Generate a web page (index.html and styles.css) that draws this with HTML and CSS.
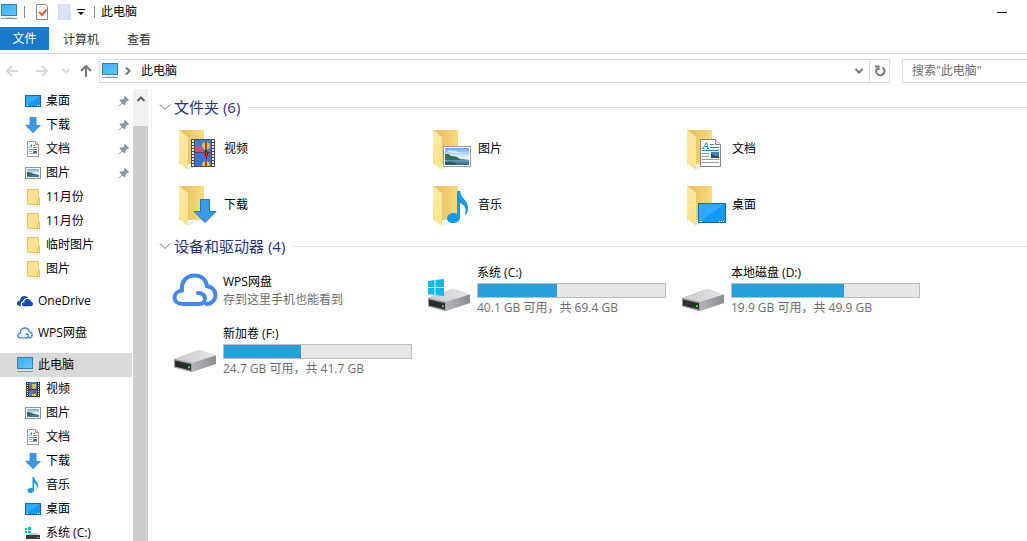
FILE: index.html
```html
<!DOCTYPE html>
<html lang="zh-CN">
	<head>
		<meta charset="UTF-8" />
		<meta name="viewport" content="width=device-width, initial-scale=1.0" />
		<title>此电脑</title>
		<link rel="stylesheet" href="styles.css">
	</head>

	<body>
		<!-- icon set -->
		<svg class="icon-set" width="0" height="0" aria-hidden="true">
			<defs>
				<linearGradient id="screenFill" x1="0" y1="0" x2="1" y2="1">
					<stop offset="0" stop-color="#3aaefb" />
					<stop offset="1" stop-color="#5fc9ff" />
				</linearGradient>
				<linearGradient id="deskFill" x1="0" y1="0" x2="1" y2="1">
					<stop offset="0.5" stop-color="#2ea9ff" />
					<stop offset="0.5" stop-color="#1499f8" />
				</linearGradient>
				<linearGradient id="folderBack" x1="0" y1="0" x2="1" y2="0">
					<stop offset="0.3" stop-color="#e9c563" />
					<stop offset="1" stop-color="#fbdb7f" />
				</linearGradient>
				<linearGradient id="folderFront" x1="0" y1="0" x2="0" y2="1">
					<stop offset="0" stop-color="#ffeaa6" />
					<stop offset="1" stop-color="#ffe28a" />
				</linearGradient>
				<linearGradient id="skyFill" x1="0" y1="0" x2="0" y2="1">
					<stop offset="0" stop-color="#6ba6f3" />
					<stop offset="0.5" stop-color="#dcefff" />
				</linearGradient>
				<linearGradient id="seaFill" x1="0" y1="0" x2="0" y2="1">
					<stop offset="0" stop-color="#6f9dbb" />
					<stop offset="1" stop-color="#2c6293" />
				</linearGradient>
				<linearGradient id="driveTop" x1="0" y1="0" x2="1" y2="0">
					<stop offset="0" stop-color="#c9cacc" />
					<stop offset="1" stop-color="#e5e6e8" />
				</linearGradient>
				<linearGradient id="driveSide" x1="0" y1="0" x2="1" y2="0">
					<stop offset="0" stop-color="#b4b5b8" />
					<stop offset="1" stop-color="#8d8e92" />
				</linearGradient>
			</defs>

			<symbol id="pc" viewBox="0 0 16 16">
				<rect x="0.5" y="0.5" width="15" height="11" fill="url(#screenFill)" stroke="#3f7ea6" />
				<path d="M4 13h8v1H4z" fill="#c9dbe6" />
				<path d="M0 14h16v1H0z" fill="#7f9bb0" />
			</symbol>
			<symbol id="desktop" viewBox="0 0 28 20">
				<rect x="0.5" y="0.5" width="27" height="19" fill="url(#deskFill)" stroke="#0a6cb8" />
				<path d="M2 18h2v1H2zM21 18h1v1h-1zM23 18h1v1h-1zM25 18h1v1h-1z" fill="#fff" />
			</symbol>
			<symbol id="desktop-small" viewBox="0 0 16 16">
				<rect x="0.5" y="2.5" width="15" height="11" fill="url(#deskFill)" stroke="#0a6cb8" />
				<path d="M2 12h1v1H2zM12 12h1v1h-1zM14 12h1v1h-1z" fill="#fff" />
			</symbol>
			<symbol id="download" viewBox="0 0 24 24">
				<path d="M7.500.5h9v12h6.500L12 23.500 1 12.500h6.500z" fill="#3a99ea" stroke="#2077c2" />
			</symbol>
			<symbol id="document" viewBox="0 0 21 28">
				<path d="M.5.500h15l5 5v22H.5z" fill="#fff" stroke="#858585" />
				<path d="M15.500.500v5h5" fill="#eee" stroke="#858585" />
				<path d="M3 9.500L6.500 3.500 8 9.500M4.500 7.500h3M2.500 9.500h2M7 9.500h2" fill="none" stroke="#2c86c8" />
				<path d="M10 5.500h4M10 8.500h9M2 11.500h17" stroke="#2c86c8" />
				<path d="M2 14.500h7M2 17.500h7M2 20.500h17M2 23.500h17" stroke="#9a9a9a" />
				<path d="M11 13h8v6h-8z" fill="#3f7fc1" />
				<path d="M11 15l4 2h4v2h-8z" fill="#25503b" />
			</symbol>
			<symbol id="document-small" viewBox="0 0 16 16">
				<path d="M2.500.5h8l3 3v12h-11z" fill="#fff" stroke="#9a9a9a" />
				<path d="M10.500.5v3h3" fill="none" stroke="#9a9a9a" />
				<path d="M4 6.500L6.500 3.500v3M8 4.500h2M8 6.500h4M4 8.500h8" fill="none" stroke="#3f97d6" />
				<path d="M4 10.500h3M4 12.500h8" stroke="#a8a8a8" />
				<path d="M8 10h4v2H8z" fill="#35709b" />
			</symbol>
			<symbol id="picture" viewBox="0 0 28 21">
				<rect x="0.5" y="0.5" width="27" height="20" fill="#fff" stroke="#9b9b9b" />
				<path d="M2 2h24v17H2z" fill="url(#skyFill)" />
				<path d="M5 5q3-2 5 0 3-1 4 1h7q-7 2-16 0z" fill="#fff" opacity="0.6" />
				<path d="M2 8q3-1 6 2 6 0 9 3l9 1v1H2z" fill="#3d6b56" />
				<path d="M2 14h24v5H2z" fill="url(#seaFill)" />
				<path d="M2 16q5-1 9 0l4 3H2z" fill="#2d5b67" />
			</symbol>
			<symbol id="picture-small" viewBox="0 0 16 16">
				<rect x="0.5" y="2.5" width="15" height="11" fill="#fff" stroke="#8f8f8f" />
				<path d="M2 4h12v8H2z" fill="url(#skyFill)" />
				<path d="M2 7q4 0 7 2l5 1v2H2z" fill="#35634f" />
				<path d="M2 11q6-2 12-1v2H2z" fill="#3f7ba6" />
			</symbol>
			<symbol id="video" viewBox="0 0 24 28">
				<path d="M0 0h24v28H0z" fill="#4c4c4c" />
				<path d="M4 1h16v12H4z" fill="#3f7bd8" />
				<path d="M4 14h16v13H4z" fill="#3c74d4" />
				<path d="M4 9l2-2 2 1 2-1 1 3 1 3H4z" fill="#d9486f" />
				<path d="M11 7a4 4 0 0 1 8 0q0 2-3 4h-2q-3-2-3-4z" fill="#f5c022" />
				<path d="M14 3h2v8h-2z" fill="#a8462a" />
				<path d="M14 11h2v2h-2z" fill="#4a2a16" />
				<path d="M12 14h7q0 2-3 4h-1q-3-2-3-4z" fill="#d23c2e" />
				<path d="M14 14h1v4h-1zM16 14h1v3h-1z" fill="#23314f" />
				<path d="M15 18h1v2h-1z" fill="#4a2a16" />
				<path d="M11 27q0-5 4-5t4 5z" fill="#f5c022" />
				<path d="M14 22h2v5h-2z" fill="#a8462a" />
				<path d="M2 1v26M22 1v26" stroke="#e8e8e8" stroke-width="2" stroke-dasharray="2 1" />
			</symbol>
			<symbol id="video-small" viewBox="0 0 16 16">
				<path d="M1 1h14v15H1z" fill="#3a3a3a" />
				<path d="M4 1h8v7H4zM4 9h8v6H4z" fill="#3f7bd8" />
				<path d="M7 3h4v3l-1 2H8L7 6z" fill="#f2bd24" />
				<path d="M8 9h3v2l-1 1H9l-1-1zM4 5h2v3H4z" fill="#c8402f" />
				<path d="M7 13h4v2H7z" fill="#f2bd24" />
				<path d="M2.500 2v13M13.500 2v13" stroke="#fff" stroke-dasharray="1 1" />
			</symbol>
			<symbol id="music" viewBox="0 0 22 32">
				<path d="M10 0h3c1 8 8 9 8 17 0 3-1 5-2 7l-1-1c2-6-1-9-5-11v14c0 4-3 6-7 6s-6-2-6-5 3-5 7-5l3 .5z" fill="#099cfa" />
			</symbol>
			<symbol id="folder" viewBox="0 0 16 16">
				<path d="M2.500.5h11v9h1v6h-12z" fill="#fde28f" stroke="#e8c65b" />
				<path d="M12.500 15.500v-5l1-1h1v6z" fill="#ffe9a5" stroke="#e5bd48" />
			</symbol>
			<symbol id="folder-open" viewBox="0 0 48 48">
				<path d="M17 45l6-2v-4z" fill="#e8e8e8" />
				<path d="M9 5h25v34H9z" fill="url(#folderBack)" />
				<path d="M9 5l9 7v33l-9-7z" fill="url(#folderFront)" />
			</symbol>
			<symbol id="onedrive" viewBox="0 0 16 16">
				<path d="M0 10.500C0 8.500 1.500 7.500 3 7.500 3 5 5 3 7.500 3c2 0 3 .8 3.700 2C8 4.500 6 6.500 6 8.500c-2 0-3 2-2 4.500H2.500C1 13 0 12 0 10.500z" fill="#0f4db0" />
				<path d="M5 11.500c0-1.500 1-2.300 2.200-2.300C7.200 7 8.800 5.800 10.500 5.800c1.700 0 3 1 3.300 2.800C15 8.700 16 9.600 16 11c0 1.300-1 2.200-2.200 2.200H7C5.800 13.200 5 12.500 5 11.500z" fill="#0f4db0" />
			</symbol>
			<symbol id="wps" viewBox="0 0 46 34">
				<path d="M27 31H11C5.500 31 2.500 28 2.500 24.500S5.500 18 10 17.500C9 8.500 14.500 2.500 22.500 2.500c6.500 0 11.500 4 12.500 10.500 5 1 8.500 4.500 8.500 9 0 5-4 9-9 9M27 31c4 0 6-2.500 6-5.500 0-3.500-3-5.500-7-5.500" fill="none" stroke="#4285f4" stroke-width="4" stroke-linecap="round" />
			</symbol>
			<symbol id="drive" viewBox="0 0 42 22">
				<path d="M0 9L25 0l17 5.500v8L17 22 0 17z" fill="#a5a6a9" />
				<path d="M0 9L25 0l17 5.500L18 13z" fill="url(#driveTop)" />
				<path d="M18 13l24-7.500v8.500L18 22z" fill="url(#driveSide)" />
				<path d="M0 9l18 4v9L0 17.500z" fill="#9b9c9f" />
				<path d="M1 10.500l16 3.700v6.300L1 16.500z" fill="#2c2c2c" />
				<path d="M14 16l2 .5v2l-2-.5z" fill="#3ee83e" />
			</symbol>
			<symbol id="winlogo" viewBox="0 0 16 17">
				<path d="M0 2l6.500-1v7H0zM7.500 1L16 0v8H7.500zM0 9h6.500v7L0 15zM7.500 9H16v8l-8.500-1z" fill="#00bcf2" />
			</symbol>
			<symbol id="system-small" viewBox="0 0 16 16">
				<path d="M0 3h2v2H0zM3 2h3v3H3zM0 6h2v2H0zM3 6h3v2H3z" fill="#00bcf2" />
				<path d="M4 8h8l3 3H1z" fill="#d0d0d0" />
				<path d="M1 10h14v4H1z" fill="#3b3b3b" />
				<path d="M12 12h2v1h-2z" fill="#3ee83e" />
			</symbol>
			<symbol id="pin" viewBox="0 0 12 12">
				<path d="M7 1l4 4-1 1-1-.3L7.500 7.500 7.500 10 6.500 10.500 4.300 8.300 1 11.500.5 11 3.700 7.700 1.500 5.500 2 4.500l2.500 0L6.500 3 6 2z" fill="#8a97a0" />
			</symbol>
			<symbol id="chevron-down" viewBox="0 0 12 12">
				<path d="M1 3.500l5 5 5-5" fill="none" stroke="currentColor" />
			</symbol>
			<symbol id="chevron-bold" viewBox="0 0 10 10">
				<path d="M1.500 3L5 6.500 8.500 3" fill="none" stroke="currentColor" stroke-width="2" />
			</symbol>
			<symbol id="arrow" viewBox="0 0 12 12">
				<path d="M1 6h11M6 1L1 6l5 5" fill="none" stroke="currentColor" stroke-width="2" />
			</symbol>
		</svg>

		<header class="title-bar">
			<svg class="icon"><use href="#pc" /></svg>
			<span class="separator"></span>
			<button class="quick-button" aria-label="属性">
				<svg class="icon" viewBox="0 0 16 16">
					<path d="M2.500.5h9l2 2v13h-11z" fill="#fff" stroke="#8a8a8a" />
					<path d="M5 8l3 3 4.500-5.500" fill="none" stroke="#e8622c" stroke-width="2" />
				</svg>
			</button>
			<button class="quick-button" aria-label="新建文件夹">
				<svg class="icon" viewBox="0 0 16 16">
					<path d="M2.500.5h11v9h1v6h-12z" fill="#d9e5f6" stroke="#cfddf0" />
					<path d="M12.500 15.500v-5l1-1h1v6z" fill="#e6eefa" stroke="#c3d4ec" />
				</svg>
			</button>
			<button class="quick-button quick-menu" aria-label="自定义快速访问工具栏">
				<svg width="8" height="8" viewBox="0 0 8 8"><path d="M0 1h8v1H0zM1 4h6L4 7z" /></svg>
			</button>
			<span class="separator"></span>
			<span class="window-title">此电脑</span>
			<button class="minimize" aria-label="最小化"></button>
		</header>

		<nav class="tabs">
			<button class="tab tab-file">文件</button>
			<button class="tab">计算机</button>
			<button class="tab">查看</button>
		</nav>

		<div class="toolbar">
			<div class="history">
				<button class="nav-button" aria-label="后退"><svg class="arrow"><use href="#arrow" /></svg></button>
				<button class="nav-button" aria-label="前进"><svg class="arrow arrow-right"><use href="#arrow" /></svg></button>
				<button class="nav-button nav-recent" aria-label="最近位置"><svg class="chevron"><use href="#chevron-bold" /></svg></button>
				<button class="nav-button nav-up" aria-label="上移"><svg class="arrow arrow-up"><use href="#arrow" /></svg></button>
			</div>
			<div class="address">
				<svg class="icon"><use href="#pc" /></svg>
				<svg class="chevron chevron-right"><use href="#chevron-bold" /></svg>
				<span class="address-text">此电脑</span>
				<button class="address-button" aria-label="以前的位置"><svg class="chevron"><use href="#chevron-bold" /></svg></button>
				<button class="address-button refresh" aria-label="刷新">
					<svg width="12" height="12" viewBox="0 0 12 12">
						<path d="M8.500 2.500A4.200 4.200 0 1 1 3 3.500M1 1.500h3.500V5" fill="none" stroke="currentColor" stroke-width="2" />
					</svg>
				</button>
			</div>
			<input class="search" type="text" aria-label="搜索" placeholder="搜索&quot;此电脑&quot;" />
		</div>

		<div class="content">
			<nav class="sidebar">
				<ul class="tree">
					<li><a class="node child" href="#"><svg class="icon"><use href="#desktop-small" /></svg>桌面<svg class="pin"><use href="#pin" /></svg></a></li>
					<li><a class="node child" href="#"><svg class="icon"><use href="#download" /></svg>下载<svg class="pin"><use href="#pin" /></svg></a></li>
					<li><a class="node child" href="#"><svg class="icon"><use href="#document-small" /></svg>文档<svg class="pin"><use href="#pin" /></svg></a></li>
					<li><a class="node child" href="#"><svg class="icon"><use href="#picture-small" /></svg>图片<svg class="pin"><use href="#pin" /></svg></a></li>
					<li><a class="node child" href="#"><svg class="icon"><use href="#folder" /></svg>11月份</a></li>
					<li><a class="node child" href="#"><svg class="icon"><use href="#folder" /></svg>11月份</a></li>
					<li><a class="node child" href="#"><svg class="icon"><use href="#folder" /></svg>临时图片</a></li>
					<li><a class="node child" href="#"><svg class="icon"><use href="#folder" /></svg>图片</a></li>
				</ul>
				<ul class="tree">
					<li><a class="node" href="#"><svg class="icon"><use href="#onedrive" /></svg>OneDrive</a></li>
				</ul>
				<ul class="tree">
					<li><a class="node" href="#"><svg class="icon"><use href="#wps" /></svg>WPS网盘</a></li>
				</ul>
				<ul class="tree">
					<li><a class="node selected" href="#"><svg class="icon"><use href="#pc" /></svg>此电脑</a></li>
					<li><a class="node child" href="#"><svg class="icon"><use href="#video-small" /></svg>视频</a></li>
					<li><a class="node child" href="#"><svg class="icon"><use href="#picture-small" /></svg>图片</a></li>
					<li><a class="node child" href="#"><svg class="icon"><use href="#document-small" /></svg>文档</a></li>
					<li><a class="node child" href="#"><svg class="icon"><use href="#download" /></svg>下载</a></li>
					<li><a class="node child" href="#"><svg class="icon"><use href="#music" /></svg>音乐</a></li>
					<li><a class="node child" href="#"><svg class="icon"><use href="#desktop-small" /></svg>桌面</a></li>
					<li><a class="node child" href="#"><svg class="icon"><use href="#system-small" /></svg>系统 (C:)</a></li>
				</ul>
			</nav>
			<div class="scrollbar">
				<button class="scroll-up" aria-label="向上滚动"><svg class="chevron chevron-up"><use href="#chevron-bold" /></svg></button>
				<div class="scroll-thumb"></div>
			</div>

			<main class="files">
				<section>
					<h2 class="group-title"><svg class="group-arrow"><use href="#chevron-down" /></svg>文件夹 (6)</h2>
					<div class="grid">
						<a class="item" href="#">
							<svg class="tile" viewBox="0 0 48 48"><use href="#folder-open" width="48" height="48" /><use href="#video" x="21" y="14" width="24" height="28" /></svg>
							<span class="name">视频</span>
						</a>
						<a class="item" href="#">
							<svg class="tile" viewBox="0 0 48 48"><use href="#folder-open" width="48" height="48" /><use href="#picture" x="19" y="21" width="28" height="21" /></svg>
							<span class="name">图片</span>
						</a>
						<a class="item" href="#">
							<svg class="tile" viewBox="0 0 48 48"><use href="#folder-open" width="48" height="48" /><use href="#document" x="22" y="14" width="21" height="28" /></svg>
							<span class="name">文档</span>
						</a>
						<a class="item" href="#">
							<svg class="tile" viewBox="0 0 48 48"><use href="#folder-open" width="48" height="48" /><use href="#download" x="23" y="18" width="24" height="24" /></svg>
							<span class="name">下载</span>
						</a>
						<a class="item" href="#">
							<svg class="tile" viewBox="0 0 48 48"><use href="#folder-open" width="48" height="48" /><use href="#music" x="23" y="10" width="22" height="32" /></svg>
							<span class="name">音乐</span>
						</a>
						<a class="item" href="#">
							<svg class="tile" viewBox="0 0 48 48"><use href="#folder-open" width="48" height="48" /><use href="#desktop" x="20" y="22" width="28" height="20" /></svg>
							<span class="name">桌面</span>
						</a>
					</div>
				</section>

				<section>
					<h2 class="group-title"><svg class="group-arrow"><use href="#chevron-down" /></svg>设备和驱动器 (4)</h2>
					<div class="grid">
						<a class="item device" href="#">
							<svg class="tile" viewBox="0 0 48 48"><use href="#wps" x="2" y="6" width="46" height="34" /></svg>
							<span class="details">
								<span class="name">WPS网盘</span>
								<span class="info">存到这里手机也能看到</span>
							</span>
						</a>
						<a class="item device" href="#">
							<svg class="tile" viewBox="0 0 48 48"><use href="#drive" x="4" y="22" width="42" height="22" /><use href="#winlogo" x="4" y="12" width="16" height="17" /></svg>
							<span class="details">
								<span class="name">系统 (C:)</span>
								<span class="usage"><span class="used" style="width: 42%"></span></span>
								<span class="info">40.1 GB 可用，共 69.4 GB</span>
							</span>
						</a>
						<a class="item device" href="#">
							<svg class="tile" viewBox="0 0 48 48"><use href="#drive" x="4" y="22" width="42" height="22" /></svg>
							<span class="details">
								<span class="name">本地磁盘 (D:)</span>
								<span class="usage"><span class="used" style="width: 60%"></span></span>
								<span class="info">19.9 GB 可用，共 49.9 GB</span>
							</span>
						</a>
						<a class="item device" href="#">
							<svg class="tile" viewBox="0 0 48 48"><use href="#drive" x="4" y="22" width="42" height="22" /></svg>
							<span class="details">
								<span class="name">新加卷 (F:)</span>
								<span class="usage"><span class="used" style="width: 41%"></span></span>
								<span class="info">24.7 GB 可用，共 41.7 GB</span>
							</span>
						</a>
					</div>
				</section>
			</main>
		</div>
	</body>
</html>
```
FILE: styles.css
```css
* {
	box-sizing: border-box;
}

body {
	font-family: 'Open Sans', 'Noto Sans CJK SC', sans-serif;
	font-size: 12px;
	line-height: 18px;
	margin: 0;
	color: #000;
	background: #fff;
	display: flex;
	flex-direction: column;
	height: 100vh;
	overflow: hidden;
}

button {
	font: inherit;
	color: inherit;
	background: none;
	border: none;
	padding: 0;
	display: flex;
	align-items: center;
	justify-content: center;
}

a {
	color: inherit;
	text-decoration: none;
}

svg {
	flex: none;
}

.icon-set {
	position: absolute;
}

.icon {
	width: 16px;
	height: 16px;
}

.chevron {
	width: 10px;
	height: 10px;
}

.chevron-right {
	transform: rotate(-90deg);
}

.chevron-up {
	transform: rotate(180deg);
}

/* title bar */

.title-bar {
	display: flex;
	align-items: center;
	height: 24px;
	padding: 0 20px 0 1px;
	flex: none;
}

.separator {
	width: 1px;
	height: 12px;
	margin: 0 6px 0 7px;
	background: #8c8c8c;
}

.quick-button {
	width: 22px;
	height: 22px;
}

.quick-menu {
	width: 12px;
}

.window-title {
	flex: 1;
}

.minimize {
	width: 10px;
	height: 1px;
	background: #000;
}

/* ribbon tabs */

.tabs {
	display: flex;
	height: 30px;
	padding: 3px 0;
	border-bottom: 1px solid #dadbdc;
	flex: none;
}

.tab {
	padding: 2px 14px 0;
	color: #333;
}

.tab-file {
	padding: 0 12px;
	width: 49px;
	background: #1979ca;
	color: #fff;
}

/* address row */

.toolbar {
	display: flex;
	height: 35px;
	padding: 5px 0 6px;
	flex: none;
}

.history {
	display: flex;
	gap: 6px;
	width: 99px;
}

.nav-button {
	width: 24px;
	color: #d9d9d9;
}

.nav-recent {
	width: 12px;
}

.nav-up {
	width: 16px;
	color: #777;
}

.arrow {
	width: 12px;
	height: 12px;
}

.arrow-right {
	transform: rotate(180deg);
}

.arrow-up {
	transform: rotate(90deg);
}

.address {
	flex: 1;
	display: flex;
	align-items: center;
	border: 1px solid #d9d9d9;
	padding-left: 2px;
	color: #777;
}

.address .chevron-right {
	margin: 0 6px 0 5px;
}

.address-text {
	flex: 1;
	padding-left: 2px;
	color: #000;
}

.address-button {
	width: 20px;
	align-self: stretch;
}

.refresh {
	border-left: 1px solid #d9d9d9;
}

.search {
	width: 125px;
	margin-left: 12px;
	padding: 0 9px;
	border: 1px solid #d9d9d9;
	border-right: none;
	font: inherit;
	outline: none;
}

.search::placeholder {
	color: #6d6d6d;
}

/* navigation tree */

.content {
	flex: 1;
	display: flex;
	min-height: 0;
}

.sidebar {
	width: 133px;
	overflow: hidden;
	flex: none;
}

.tree {
	list-style: none;
	margin: 0 0 8px;
	padding: 0 1px 0 0;
}

.node {
	display: flex;
	align-items: center;
	gap: 5px;
	height: 24px;
	padding: 0 2px 0 17px;
}

.node.child {
	padding-left: 25px;
}

.node.selected {
	background: #d9d9d9;
}

.pin {
	width: 12px;
	height: 12px;
	margin-left: auto;
}

.scrollbar {
	width: 19px;
	padding-right: 3px;
	display: flex;
	flex-direction: column;
	border-right: 1px solid #f0f0f0;
	flex: none;
}

.scroll-up {
	height: 37px;
	padding-bottom: 18px;
	background: #f0f0f0;
	color: #606060;
}

.scroll-thumb {
	flex: 1;
	background: #cdcdcd;
}

/* file list */

.files {
	flex: 1;
	padding: 8px 0 0 7px;
	overflow: hidden;
}

.group-title {
	display: flex;
	align-items: center;
	gap: 3px;
	height: 20px;
	margin: 0;
	font-size: 15px;
	font-weight: normal;
	line-height: 20px;
	color: #1e3287;
}

.group-title::after {
	content: '';
	flex: 1;
	height: 1px;
	margin-left: 5px;
	background: #e2e2e2;
}

.group-arrow {
	width: 12px;
	height: 12px;
	color: #6d6d6d;
}

.grid {
	display: grid;
	grid-template-columns: repeat(auto-fill, 254px);
	padding: 4px 0 3px 11px;
}

.item {
	display: flex;
	align-items: center;
	gap: 6px;
	height: 56px;
}

.item.device {
	gap: 5px;
	height: 61px;
}

.tile {
	width: 48px;
	height: 48px;
}

.details {
	display: flex;
	flex-direction: column;
	width: 189px;
}

.info {
	color: #6d6d6d;
}

.usage {
	height: 15px;
	margin: 1px 0;
	border: 1px solid #bcbcbc;
	background: #e6e6e6;
}

.used {
	display: block;
	height: 100%;
	background: #26a0da;
}
```
